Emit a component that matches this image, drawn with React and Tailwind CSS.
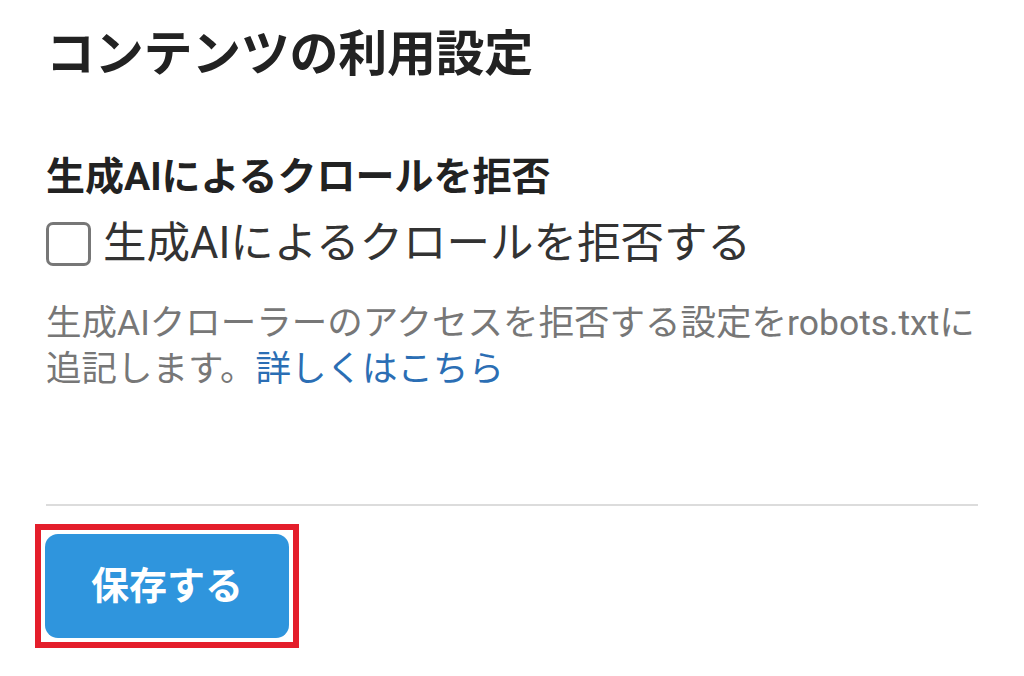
export default function App() {
  return (
    <div
      className="min-h-[676px] w-[1024px] bg-white pl-[46px] pr-[46px] pt-[25px] text-[#222]"
      style={{ fontFamily: '"Roboto", "Noto Sans CJK JP", sans-serif' }}
    >
      <h1 className="text-[49px] font-bold leading-[60px] tracking-[-0.3px]">コンテンツの利用設定</h1>

      <section className="mt-[69px]">
        <h2 className="text-[39px] font-bold leading-[46px]">生成AIによるクロールを拒否</h2>

        <label className="mt-[18px] flex items-center gap-[12px]">
          <span className="h-[44px] w-[45px] shrink-0 rounded-[7px] border-[3px] border-[#777]" />
          <span className="text-[43.5px] leading-[52px] text-[#333]">生成AIによるクロールを拒否する</span>
        </label>

        <p className="mt-[30px] text-[35.5px] leading-[46px] text-[#777]">
          生成AIクローラーのアクセスを拒否する設定をrobots.txtに
          <br />
          追記します。
          <a href="#" className="text-[#2b6eb4]">詳しくはこちら</a>
        </p>
      </section>

      <div className="mt-[112px] h-[2px] w-[932px] bg-[#dcdcdc]" />

      <div className="-ml-[11px] mt-[18px] inline-block border-[6px] border-[#e41e2b] bg-white p-[4px]">
        <button className="flex h-[104px] w-[244px] items-center justify-center rounded-[13px] bg-[#2f95dd] text-[38px] font-bold text-white">
          保存する
        </button>
      </div>
    </div>
  )
}
